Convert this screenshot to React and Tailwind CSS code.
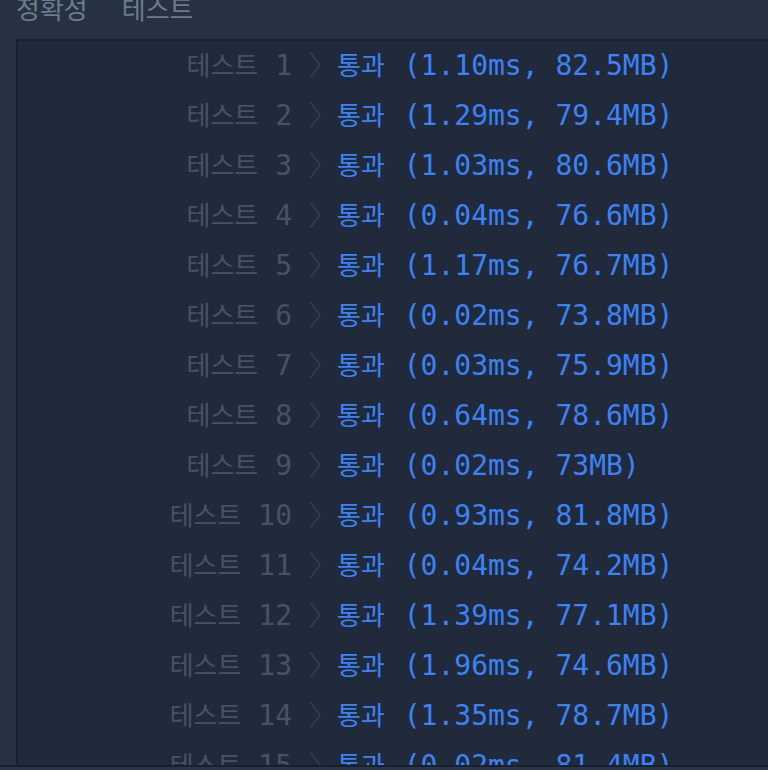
import React from 'react';

const rows = [
    ['1', '1.10ms, 82.5MB'],
    ['2', '1.29ms, 79.4MB'],
    ['3', '1.03ms, 80.6MB'],
    ['4', '0.04ms, 76.6MB'],
    ['5', '1.17ms, 76.7MB'],
    ['6', '0.02ms, 73.8MB'],
    ['7', '0.03ms, 75.9MB'],
    ['8', '0.64ms, 78.6MB'],
    ['9', '0.02ms, 73MB'],
    ['10', '0.93ms, 81.8MB'],
    ['11', '0.04ms, 74.2MB'],
    ['12', '1.39ms, 77.1MB'],
    ['13', '1.96ms, 74.6MB'],
    ['14', '1.35ms, 78.7MB'],
    ['15', '0.02ms, 81.4MB'],
];

const mono = "font-['DejaVu_Sans_Mono','Noto_Sans_CJK_KR',monospace]";
const kr = "font-['Noto_Sans_CJK_KR',sans-serif] text-[26px]";

const Chevron = () => (
    <svg width="14" height="28" viewBox="0 0 14 28" fill="none" stroke="#343f51" strokeWidth="1.5">
        <polyline points="2,1 12,14 2,27" />
    </svg>
);

const App = () => {
    return (
        <div className="w-[768px] h-[770px] bg-[#263241] flex flex-col overflow-hidden">
            <div className="h-[39px] shrink-0 pl-[16px] flex gap-[34px] font-['Noto_Sans_CJK_KR',sans-serif] text-[26px] leading-[26px] text-[#6b7c8d] -mt-[5px]">
                <span>정확성</span>
                <span>테스트</span>
            </div>
            <div className="flex-1 min-h-0 pl-[16px] pt-[5px]">
                <div className="h-full border-l-2 border-t-2 border-[#18202e] bg-[#212a3b] overflow-hidden">
                    <div className="-mt-px">
                        {rows.map(([n, r]) => (
                            <div key={n} className={`flex h-[50px] items-center text-[28px] leading-[50px] whitespace-pre ${mono}`}>
                                <span className="w-[274px] text-right text-[#465366]">
                                    <span className={kr}>테스트</span> {n}
                                </span>
                                <span className="w-[45px] flex justify-center items-center">
                                    <Chevron />
                                </span>
                                <span className="text-[#3b82f6]">
                                    <span className={kr}>통과</span>
                                    <span className="ml-[2px]"> ({r})</span>
                                </span>
                            </div>
                        ))}
                    </div>
                </div>
            </div>
            <div className="h-[5px] shrink-0 border-t-2 border-[#18202e] bg-[#2b3747]" />
        </div>
    );
};

export default App;
